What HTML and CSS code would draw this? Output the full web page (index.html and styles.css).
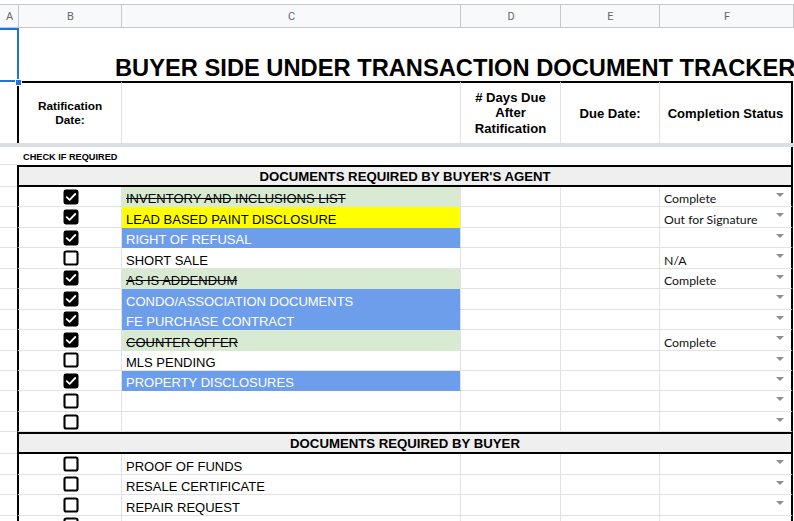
FILE: index.html
```html
<!DOCTYPE html>
<html>
<head>
<meta charset="utf-8">
<title>Buyer Side Under Transaction Document Tracker</title>
<link rel="stylesheet" href="styles.css">
</head>
<body>
<svg class="defs" width="0" height="0" aria-hidden="true">
  <symbol id="on" viewBox="0 0 16 16"><rect x="0.5" y="0.5" width="15" height="15" rx="2.4" fill="#000"/><path d="M3.7 8.1 L6.6 10.9 L12.3 5" fill="none" stroke="#fff" stroke-width="1.8" stroke-linecap="round" stroke-linejoin="round"/></symbol>
  <symbol id="off" viewBox="0 0 16 16"><rect x="1.5" y="1.5" width="13" height="13" rx="1.8" fill="#fff" stroke="#000" stroke-width="2.1"/></symbol>
</svg>
<div class="sheet">
  <div class="topstrip"></div>
  <div class="colhdr">
    <div class="ch">A</div><div class="ch">B</div><div class="ch">C</div><div class="ch">D</div><div class="ch">E</div><div class="ch">F</div>
  </div>

  <div class="row title-row">
    <div class="a0"></div>
    <div class="title">BUYER SIDE UNDER TRANSACTION DOCUMENT TRACKER</div>
  </div>
  <div class="selbox"><span class="handle"></span></div>

  <div class="row head-row">
    <div class="a0"></div>
    <div class="h hb small">Ratification<br>Date:</div>
    <div class="h hc"></div>
    <div class="h hd">#&nbsp;Days Due<br>After<br>Ratification</div>
    <div class="h he">Due Date:</div>
    <div class="h hf">Completion Status</div>
    <div class="z"></div>
  </div>
  <div class="freeze"></div>

  <div class="row note-row">
    <div class="a"></div>
    <div class="note">CHECK IF REQUIRED</div>
    <div class="z"></div>
  </div>

  <div class="row sec">
    <div class="a"></div>
    <div class="sh">DOCUMENTS REQUIRED BY BUYER'S AGENT</div>
    <div class="z"></div>
  </div>

  <div class="row data">
    <div class="a"></div>
    <div class="b"><svg class="cb"><use href="#on"/></svg></div>
    <div class="c green done">INVENTORY AND INCLUSIONS LIST</div>
    <div class="d"></div><div class="e"></div>
    <div class="f"><span>Complete</span><i class="dd"></i></div>
    <div class="z"></div>
  </div>
  <div class="row data">
    <div class="a"></div>
    <div class="b"><svg class="cb"><use href="#on"/></svg></div>
    <div class="c yellow">LEAD BASED PAINT DISCLOSURE</div>
    <div class="d"></div><div class="e"></div>
    <div class="f"><span>Out for Signature</span><i class="dd"></i></div>
    <div class="z"></div>
  </div>
  <div class="row data">
    <div class="a"></div>
    <div class="b"><svg class="cb"><use href="#on"/></svg></div>
    <div class="c blue">RIGHT OF REFUSAL</div>
    <div class="d"></div><div class="e"></div>
    <div class="f"><span></span><i class="dd"></i></div>
    <div class="z"></div>
  </div>
  <div class="row data">
    <div class="a"></div>
    <div class="b"><svg class="cb"><use href="#off"/></svg></div>
    <div class="c">SHORT SALE</div>
    <div class="d"></div><div class="e"></div>
    <div class="f"><span>N/A</span><i class="dd"></i></div>
    <div class="z"></div>
  </div>
  <div class="row data">
    <div class="a"></div>
    <div class="b"><svg class="cb"><use href="#on"/></svg></div>
    <div class="c green done">AS IS ADDENDUM</div>
    <div class="d"></div><div class="e"></div>
    <div class="f"><span>Complete</span><i class="dd"></i></div>
    <div class="z"></div>
  </div>
  <div class="row data">
    <div class="a"></div>
    <div class="b"><svg class="cb"><use href="#on"/></svg></div>
    <div class="c blue">CONDO/ASSOCIATION DOCUMENTS</div>
    <div class="d"></div><div class="e"></div>
    <div class="f"><span></span><i class="dd"></i></div>
    <div class="z"></div>
  </div>
  <div class="row data">
    <div class="a"></div>
    <div class="b"><svg class="cb"><use href="#on"/></svg></div>
    <div class="c blue">FE PURCHASE CONTRACT</div>
    <div class="d"></div><div class="e"></div>
    <div class="f"><span></span><i class="dd"></i></div>
    <div class="z"></div>
  </div>
  <div class="row data">
    <div class="a"></div>
    <div class="b"><svg class="cb"><use href="#on"/></svg></div>
    <div class="c green done">COUNTER OFFER</div>
    <div class="d"></div><div class="e"></div>
    <div class="f"><span>Complete</span><i class="dd"></i></div>
    <div class="z"></div>
  </div>
  <div class="row data">
    <div class="a"></div>
    <div class="b"><svg class="cb"><use href="#off"/></svg></div>
    <div class="c">MLS PENDING</div>
    <div class="d"></div><div class="e"></div>
    <div class="f"><span></span><i class="dd"></i></div>
    <div class="z"></div>
  </div>
  <div class="row data">
    <div class="a"></div>
    <div class="b"><svg class="cb"><use href="#on"/></svg></div>
    <div class="c blue">PROPERTY DISCLOSURES</div>
    <div class="d"></div><div class="e"></div>
    <div class="f"><span></span><i class="dd"></i></div>
    <div class="z"></div>
  </div>
  <div class="row data">
    <div class="a"></div>
    <div class="b"><svg class="cb"><use href="#off"/></svg></div>
    <div class="c"></div>
    <div class="d"></div><div class="e"></div>
    <div class="f"><span></span><i class="dd"></i></div>
    <div class="z"></div>
  </div>
  <div class="row data">
    <div class="a"></div>
    <div class="b"><svg class="cb"><use href="#off"/></svg></div>
    <div class="c"></div>
    <div class="d"></div><div class="e"></div>
    <div class="f"><span></span><i class="dd"></i></div>
    <div class="z"></div>
  </div>

  <div class="row sec">
    <div class="a"></div>
    <div class="sh">DOCUMENTS REQUIRED BY BUYER</div>
    <div class="z"></div>
  </div>

  <div class="row data">
    <div class="a"></div>
    <div class="b"><svg class="cb"><use href="#off"/></svg></div>
    <div class="c">PROOF OF FUNDS</div>
    <div class="d"></div><div class="e"></div>
    <div class="f"><span></span><i class="dd"></i></div>
    <div class="z"></div>
  </div>
  <div class="row data">
    <div class="a"></div>
    <div class="b"><svg class="cb"><use href="#off"/></svg></div>
    <div class="c">RESALE CERTIFICATE</div>
    <div class="d"></div><div class="e"></div>
    <div class="f"><span></span><i class="dd"></i></div>
    <div class="z"></div>
  </div>
  <div class="row data">
    <div class="a"></div>
    <div class="b"><svg class="cb"><use href="#off"/></svg></div>
    <div class="c">REPAIR REQUEST</div>
    <div class="d"></div><div class="e"></div>
    <div class="f"><span></span><i class="dd"></i></div>
    <div class="z"></div>
  </div>
  <div class="row data">
    <div class="a"></div>
    <div class="b"><svg class="cb"><use href="#off"/></svg></div>
    <div class="c"></div>
    <div class="d"></div><div class="e"></div>
    <div class="f"><span></span><i class="dd"></i></div>
    <div class="z"></div>
  </div>
</div>
</body>
</html>
```

FILE: styles.css
```css
* { box-sizing: border-box; }
html, body { margin: 0; padding: 0; background: #fff; }
body {
  width: 794px;
  height: 521px;
  overflow: hidden;
  font-family: "Liberation Sans", Arial, sans-serif;
  color: #000;
}
.defs { position: absolute; width: 0; height: 0; overflow: hidden; }
.sheet { position: relative; width: 794px; }

.topstrip { height: 4px; background: #fff; }

.colhdr {
  display: grid;
  grid-template-columns: 19px 103px 339px 100px 99px 134px;
  height: 24px;
  background: #f8f9fa;
  border-top: 1px solid #c7c7c7;
  border-bottom: 1px solid #c7c7c7;
}
.ch {
  border-right: 1px solid #c7c7c7;
  display: flex;
  align-items: center;
  justify-content: center;
  padding-left: 1px;
  font-family: Roboto, "Liberation Sans", sans-serif;
  font-size: 11px;
  color: #666;
}

.row {
  display: grid;
  grid-template-columns: 17px 105px 339px 100px 99px 133px 1px;
}

/* title row */
.title-row { height: 53px; }
.title {
  grid-column: 2 / 8;
  display: flex;
  align-items: flex-end;
  padding-left: 98px;
  padding-bottom: 0;
  font-weight: bold;
  font-size: 23.7px;
  line-height: 23.7px;
  white-space: nowrap;
  overflow: hidden;
}
.selbox {
  position: absolute;
  left: -2px;
  top: 28px;
  width: 21px;
  height: 54px;
  border: 2px solid #1a73e8;
}
.handle {
  position: absolute;
  right: -5px;
  bottom: -6px;
  width: 7px;
  height: 7px;
  background: #1a73e8;
  border: 1px solid #fff;
}

/* header row */
.head-row { height: 62px; }
.h {
  border-top: 2px solid #000;
  border-right: 1px solid #e2e2e2;
  display: flex;
  align-items: center;
  justify-content: center;
  text-align: center;
  font-weight: bold;
  font-size: 13.1px;
  line-height: 15.5px;
  padding-top: 1px;
}
.h.small { font-size: 11.8px; line-height: 14px; padding-top: 0; padding-bottom: 1px; }
.hb { border-left: 2px solid #000; }
.hd { padding-top: 0; padding-bottom: 0; }
.hf { border-right: 2px solid #000; }

.freeze { height: 4px; background: #dadfe5; }

/* note row */
.note-row { height: 18px; }
.note {
  grid-column: 2 / 7;
  border-right: 2px solid #000;
  display: flex;
  align-items: flex-end;
  padding-left: 6px;
  padding-bottom: 2.5px;
  font-weight: bold;
  font-size: 9.2px;
  line-height: 11px;
  white-space: nowrap;
}

/* section header */
.sec { height: 22px; }
.sh {
  grid-column: 2 / 7;
  border: 2px solid #000;
  background: #efefef;
  display: flex;
  align-items: center;
  justify-content: center;
  font-weight: bold;
  font-size: 13.2px;
  line-height: 15px;
  padding-top: 0.5px;
  white-space: nowrap;
}

/* data rows */
.data { height: 20.45px; }
.a { border-bottom: 1px solid #e2e2e2; }
.b, .c, .d, .e {
  border-right: 1px solid #e2e2e2;
  border-bottom: 1px solid #e2e2e2;
}
.b {
  border-left: 2px solid #000;
  display: flex;
  align-items: center;
  justify-content: center;
  padding-left: 1px;
}
.cb { width: 16px; height: 16px; display: block; }

.c {
  display: flex;
  align-items: flex-end;
  padding: 0 4px 0 4px;
  font-size: 13px;
  line-height: 14px;
  white-space: nowrap;
  overflow: hidden;
}
.green { background: #d9ead3; border-bottom-color: transparent; }
.yellow { background: #ffff00; border-bottom-color: transparent; }
.blue { background: #6d9eeb; color: #fff; border-bottom-color: transparent; }
.done { text-decoration: line-through; }

.f {
  border-right: 2px solid #000;
  border-bottom: 1px solid #e2e2e2;
  display: flex;
  justify-content: space-between;
  align-items: flex-end;
  padding: 0 7px 0 4px;
  font-family: Lato, "Open Sans", sans-serif;
  font-size: 12.3px;
  line-height: 15px;
  color: #111;
  white-space: nowrap;
}
.dd {
  align-self: flex-start;
  margin-top: 6px;
  width: 0;
  height: 0;
  border-left: 4px solid transparent;
  border-right: 4px solid transparent;
  border-top: 4px solid #8f8f8f;
}
.z { }
```
